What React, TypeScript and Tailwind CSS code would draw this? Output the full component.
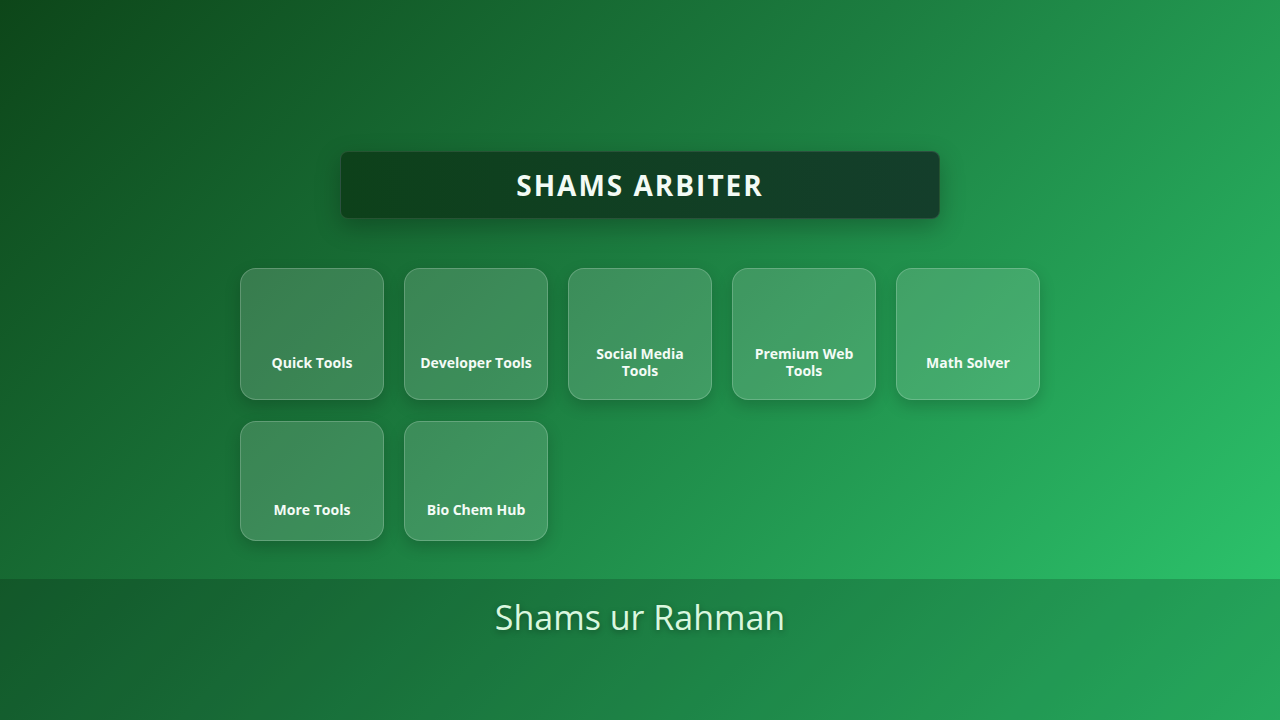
import React from "react";

const cards = [
  "Quick Tools",
  "Developer Tools",
  "Social Media Tools",
  "Premium Web Tools",
  "Math Solver",
  "More Tools",
  "Bio Chem Hub",
];

export default function App() {
  return (
    <div
      className="flex min-h-screen flex-col bg-[linear-gradient(135deg,#0d4619_0%,#1c7d40_45%,#2ecc71_100%)] text-white"
      style={{ fontFamily: '"Open Sans", "Noto Sans", sans-serif' }}
    >
      <main className="flex flex-col items-center pt-[151px] pb-[38px]">
        <div className="flex h-[68px] w-[600px] items-center justify-center rounded-lg border border-white/10 bg-gradient-to-r from-[#0d411a] to-[#143e2b] pt-[2px] shadow-[0_8px_24px_rgba(0,0,0,0.25)]">
          <h1 className="text-[28px] font-bold leading-[1.2] tracking-[2px] text-[#f3fbf5]">
            SHAMS ARBITER
          </h1>
        </div>
        <div className="mt-[49px] grid w-[800px] grid-cols-[repeat(5,144px)] gap-x-5 gap-y-[21px]">
          {cards.map((c) => (
            <div
              key={c}
              className="flex min-h-[120px] flex-col items-center justify-center rounded-2xl border border-white/20 bg-white/15 px-3 py-5 shadow-[0_6px_16px_rgba(0,0,0,0.18)]"
            >
              <div className="h-[56px] w-full" />
              <div className="flex min-h-[17px] items-center text-center text-[14px] font-bold leading-[17px] text-[#f4fbf6]">
                {c}
              </div>
            </div>
          ))}
        </div>
      </main>
      <footer className="flex flex-1 justify-center bg-black/[0.17] pt-[18px] pb-4">
        <div className="text-[34px] leading-[1.2] text-[#d9f7df] [text-shadow:0_2px_6px_rgba(0,0,0,0.35)]">
          Shams ur Rahman
        </div>
      </footer>
    </div>
  );
}
